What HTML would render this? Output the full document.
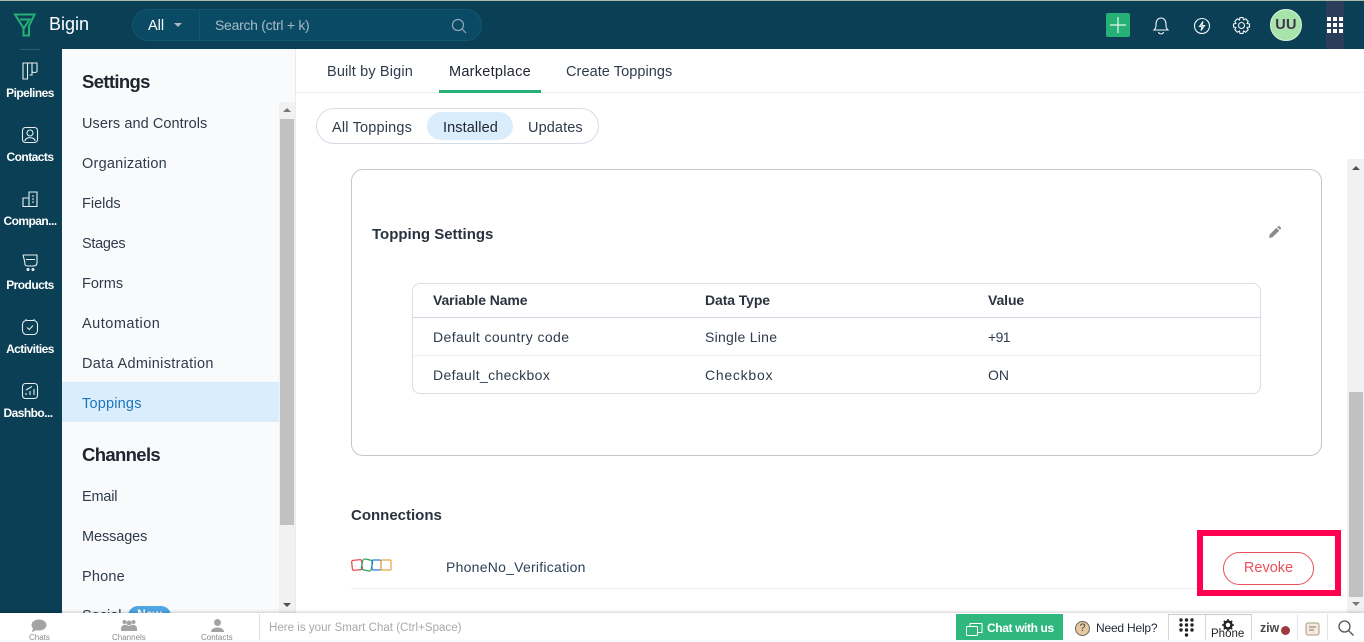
<!DOCTYPE html>
<html><head><meta charset="utf-8"><style>
*{box-sizing:border-box}
html,body{margin:0;padding:0;width:1364px;height:640px;overflow:hidden;background:#fff;font-family:"Liberation Sans",sans-serif;color:#2c3a4b}
.a{position:absolute;white-space:nowrap}
.nav{left:0;width:60px;text-align:center;color:#fff;font-size:12px;font-weight:bold;letter-spacing:-.55px}
.m{left:82px;font-size:14.5px;color:#2f3b4c}
.h{left:82px;font-size:18.5px;font-weight:bold;color:#20262f;letter-spacing:-.65px}
.t{font-size:14.5px;color:#2f3b4c}
.c{font-size:14px;color:#2f3b4c}
.hd{font-size:14px;font-weight:bold;color:#2a3340;letter-spacing:-.1px}
svg{position:absolute;overflow:visible}
</style></head><body>
<div class="a" style="left:0;top:0;width:1364px;height:49px;background:#0a3f55"></div>
<div class="a" style="left:0;top:0;width:1364px;height:1px;background:#a8b8a8"></div>
<svg style="left:14px;top:13px" width="24" height="24" fill="none" stroke="#25b175" stroke-width="2"><path d="M1 1.500H20.500L15 13V22.500H9.500V15ZM6 6.500H15.500L10 15"/></svg>
<div class="a" style="left:49px;top:14px;font-size:18px;color:#fff">Bigin</div>
<div class="a" style="left:132px;top:9px;width:350px;height:32px;border-radius:16px;background:#0b4a65;border:1px solid #14566f"></div>
<div class="a" style="left:199px;top:10px;width:1px;height:30px;background:#14566f"></div>
<div class="a" style="left:148px;top:18px;font-size:14.5px;color:#fff">All</div>
<div class="a" style="left:174px;top:23px;border:4px solid transparent;border-top:4px solid #a9bcc6"></div>
<div class="a" style="left:215px;top:17px;font-size:14px;color:#a6bac5;letter-spacing:-.28px">Search (ctrl + k)</div>
<svg style="left:451px;top:18px" width="16" height="16" fill="none" stroke="#8fa8b5" stroke-width="1.2"><circle cx="7" cy="7" r="5.500"/><path d="M11 11L15 15"/></svg>
<div class="a" style="left:1106px;top:13px;width:24px;height:24px;border-radius:2px;background:#25b175"></div>
<svg style="left:1106px;top:13px" width="24" height="24" stroke="#e8f7ef" stroke-width="1.2"><path d="M12 4V20M4 12H20"/></svg>
<svg style="left:1153px;top:17px" width="16" height="18" fill="none" stroke="#f2f6f7" stroke-width="1.1"><path d="M1 13C3 11 3 10 3 7C3 3.500 5 1 8 1C11 1 13 3.500 13 7C13 10 13 11 15 13ZM5.500 15C6 17.500 10 17.500 10.500 15"/></svg>
<svg style="left:1193px;top:17px" width="18" height="18" fill="none" stroke="#f2f6f7" stroke-width="1.1"><circle cx="9" cy="9" r="7.500"/><path d="M10 4.500L6.500 9.500H9L8 13.500L11.500 8.500H9Z"/></svg>
<svg style="left:1233px;top:17px" width="17" height="17" fill="none" stroke="#f2f6f7" stroke-width="1.1"><circle cx="8.500" cy="8.500" r="3"/><path d="M7 .5H10L10.500 2.800L12.700 1.800L15.200 4.300L14.100 6.500L16.500 7V10L14.100 10.500L15.200 12.700L12.700 15.200L10.500 14.100L10 16.500H7L6.500 14.100L4.300 15.200L1.800 12.700L2.900 10.500L.5 10V7L2.900 6.500L1.800 4.300L4.300 1.800L6.500 2.900Z"/></svg>
<div class="a" style="left:1270px;top:9px;width:32px;height:32px;border-radius:50%;background:#a6e4aa;border:1px solid #dcefdc;text-align:center;font-size:14.5px;line-height:30px;color:#47324f;font-weight:bold;letter-spacing:.3px">UU</div>
<div class="a" style="left:1326px;top:1px;width:18px;height:48px;background:#2a3d5a"></div>
<div class="a" style="left:1327px;top:17px;width:16px;height:16px;background:
linear-gradient(#fff,#fff) 0 0/4px 4px no-repeat,linear-gradient(#fff,#fff) 6px 0/4px 4px no-repeat,linear-gradient(#fff,#fff) 12px 0/4px 4px no-repeat,
linear-gradient(#fff,#fff) 0 6px/4px 4px no-repeat,linear-gradient(#fff,#fff) 6px 6px/4px 4px no-repeat,linear-gradient(#fff,#fff) 12px 6px/4px 4px no-repeat,
linear-gradient(#fff,#fff) 0 12px/4px 4px no-repeat,linear-gradient(#fff,#fff) 6px 12px/4px 4px no-repeat,linear-gradient(#fff,#fff) 12px 12px/4px 4px no-repeat"></div>

<div class="a" style="left:0;top:49px;width:62px;height:565px;background:#0a3f55"></div>
<div class="a" style="left:20px;top:49px;width:20px;height:1px;background:#2f5d70"></div>
<svg style="left:21px;top:62px" width="18" height="18" fill="none" stroke="#e6eef1" stroke-width="1.1"><path d="M2 1H6.500V17H2ZM6.500 1H11V13H8.500M11 1H16V9C16 11 11 11 11 9"/></svg>
<div class="a nav" style="top:86px">Pipelines</div>
<svg style="left:22px;top:127px" width="16" height="16" fill="none" stroke="#e6eef1" stroke-width="1.1"><rect x=".5" y=".5" width="15" height="15" rx="3"/><circle cx="8" cy="6" r="3"/><path d="M3 14C3 9.500 13 9.500 13 14"/></svg>
<div class="a nav" style="top:150px">Contacts</div>
<svg style="left:22px;top:191px" width="16" height="16" fill="none" stroke="#e6eef1" stroke-width="1.1"><path d="M7 15.500V1H15V15.500ZM7 7H1V15.500H7M10 5H12M10 8H12M10 11H12"/></svg>
<div class="a nav" style="top:214px">Compan...</div>
<svg style="left:22px;top:254px" width="17" height="18" fill="none" stroke="#e6eef1" stroke-width="1.1"><path d="M1 1H15V8C15 11 14 12 11 12H6C3 12 2.800 11 2.800 8L1 1M4 5.500H13"/><circle cx="6" cy="15.500" r="1" fill="#e6eef1"/><circle cx="11" cy="15.500" r="1" fill="#e6eef1"/></svg>
<div class="a nav" style="top:278px">Products</div>
<svg style="left:22px;top:319px" width="16" height="16" fill="none" stroke="#e6eef1" stroke-width="1.1"><rect x=".5" y="1.500" width="15" height="14" rx="4"/><path d="M5 8.500L7.300 10.500L11 6.500M4 0V2M12 0V2"/></svg>
<div class="a nav" style="top:342px">Activities</div>
<svg style="left:22px;top:383px" width="16" height="16" fill="none" stroke="#e6eef1" stroke-width="1.1"><rect x=".5" y=".5" width="15" height="15" rx="3"/><path d="M4 12V10M8 12V8M12 12V6M4 7L10 3.500"/></svg>
<div class="a nav" style="top:406px;width:56px">Dashbo...</div>

<div class="a" style="left:62px;top:49px;width:234px;height:565px;background:#f9fafc"></div>
<div class="a h" style="top:71px">Settings</div>
<div class="a m" style="top:116px;letter-spacing:.07px">Users and Controls</div>
<div class="a m" style="top:156px;letter-spacing:.23px">Organization</div>
<div class="a m" style="top:196px">Fields</div>
<div class="a m" style="top:236px;letter-spacing:-.3px">Stages</div>
<div class="a m" style="top:276px">Forms</div>
<div class="a m" style="top:316px;letter-spacing:.5px">Automation</div>
<div class="a m" style="top:356px;letter-spacing:.32px">Data Administration</div>
<div class="a" style="left:62px;top:382px;width:217px;height:40px;background:#d9edfd"></div>
<div class="a m" style="top:396px;color:#1c76b8;letter-spacing:.2px">Toppings</div>
<div class="a h" style="top:444px">Channels</div>
<div class="a m" style="top:489px;letter-spacing:-.2px">Email</div>
<div class="a m" style="top:529px;letter-spacing:-.1px">Messages</div>
<div class="a m" style="top:569px;letter-spacing:.2px">Phone</div>
<div class="a m" style="top:608px">Social</div>
<div class="a" style="left:128px;top:606px;width:43px;height:20px;border-radius:10px;background:#4fa6e3;color:#fff;font-size:12px;text-align:center;line-height:16px;font-weight:bold">New</div>
<div class="a" style="left:279px;top:102px;width:16px;height:512px;background:#f1f1f1"></div>
<div class="a" style="left:280px;top:119px;width:14px;height:406px;background:#c1c1c1"></div>
<div class="a" style="left:283px;top:108px;border:4px solid transparent;border-top:0;border-bottom:4px solid #777"></div>
<div class="a" style="left:283px;top:603px;border:4px solid transparent;border-bottom:0;border-top:4px solid #505050"></div>
<div class="a" style="left:295px;top:49px;width:1px;height:565px;background:#e8eaee"></div>

<div class="a" style="left:296px;top:92px;width:1068px;height:1px;background:#eef2f4"></div>
<div class="a t" style="left:327px;top:64px;letter-spacing:.15px">Built by Bigin</div>
<div class="a t" style="left:449px;top:64px;color:#20262f;letter-spacing:.27px">Marketplace</div>
<div class="a t" style="left:566px;top:64px;letter-spacing:.07px">Create Toppings</div>
<div class="a" style="left:439px;top:90px;width:102px;height:3px;background:#25b175"></div>
<div class="a" style="left:316px;top:108px;width:283px;height:36px;border-radius:18px;border:1px solid #d5dce5"></div>
<div class="a" style="left:427px;top:112px;width:86px;height:28px;border-radius:14px;background:#d9edfd"></div>
<div class="a t" style="left:332px;top:120px;letter-spacing:.18px">All Toppings</div>
<div class="a t" style="left:443px;top:120px;color:#20262f;letter-spacing:.1px">Installed</div>
<div class="a t" style="left:528px;top:120px;letter-spacing:.1px">Updates</div>

<div class="a" style="left:1347px;top:159px;width:17px;height:455px;background:#f1f1f1"></div>
<div class="a" style="left:1349px;top:392px;width:14px;height:205px;background:#c1c1c1"></div>
<div class="a" style="left:1352px;top:166px;border:4px solid transparent;border-top:0;border-bottom:4px solid #505050"></div>
<div class="a" style="left:1352px;top:602px;border:4px solid transparent;border-bottom:0;border-top:4px solid #777"></div>

<div class="a" style="left:351px;top:169px;width:971px;height:287px;border:1px solid #c4c7cc;border-radius:12px"></div>
<div class="a hd" style="left:372px;top:226px;font-size:15px;letter-spacing:0">Topping Settings</div>
<svg style="left:1269px;top:226px" width="12" height="12" fill="#8c8c8c"><path d="M0 12L.7 8.500L7.300 1.800L10.300 4.800L3.500 11.300ZM8.200 1L9 .2C9.500 -.1 10 -.1 10.400 .2L11.800 1.600C12.100 2 12.100 2.500 11.800 3L11 3.800Z"/></svg>
<div class="a" style="left:412px;top:283px;width:849px;height:111px;border:1px solid #d8dee6;border-radius:8px"></div>
<div class="a" style="left:413px;top:317px;width:847px;height:1px;background:#cfd8e2"></div>
<div class="a" style="left:413px;top:355px;width:847px;height:1px;background:#eaeef3"></div>
<div class="a hd" style="left:433px;top:292px">Variable Name</div>
<div class="a hd" style="left:705px;top:292px">Data Type</div>
<div class="a hd" style="left:988px;top:292px">Value</div>
<div class="a c" style="left:433px;top:329px;letter-spacing:.4px">Default country code</div>
<div class="a c" style="left:705px;top:329px;letter-spacing:.27px">Single Line</div>
<div class="a c" style="left:988px;top:329px;letter-spacing:-.6px">+91</div>
<div class="a c" style="left:433px;top:367px;letter-spacing:.37px">Default_checkbox</div>
<div class="a c" style="left:705px;top:367px;letter-spacing:.75px">Checkbox</div>
<div class="a c" style="left:988px;top:367px">ON</div>

<div class="a hd" style="left:351px;top:507px;font-size:15px;letter-spacing:0">Connections</div>
<svg style="left:351px;top:558px" width="41" height="15" fill="none" stroke-width="1.2"><rect x="1" y="2" width="10" height="10" rx="1.500" stroke="#e8414b" transform="rotate(-6 6 7)"/><rect x="11" y="1.500" width="10" height="11" rx="2" stroke="#27a564" transform="rotate(12 16 7)"/><rect x="21" y="2" width="9" height="10" rx="1.500" stroke="#2a7fd0"/><rect x="30" y="2" width="10" height="10" rx="1" stroke="#eea43f"/></svg>
<div class="a c" style="left:446px;top:559px;color:#2c4258;letter-spacing:.25px">PhoneNo_Verification</div>
<div class="a" style="left:351px;top:588px;width:846px;height:1px;background:#eaeef5"></div>
<div class="a" style="left:1197px;top:530px;width:144px;height:66px;border:6px solid #ff0050"></div>
<div class="a" style="left:1223px;top:552px;width:91px;height:33px;border:1px solid #e8505b;border-radius:17px;color:#e8505b;text-align:center;font-size:14.5px;line-height:31px">Revoke</div>

<div class="a" style="left:0;top:613px;width:1364px;height:27px;background:#fff;box-shadow:0 -1px 3px rgba(0,0,0,.18)"></div>
<svg style="left:31px;top:619px" width="16" height="13" fill="#a3a3a3"><ellipse cx="8" cy="6" rx="7.500" ry="5.500"/><path d="M2 9L1 13L6 11Z"/></svg>
<div class="a" style="left:29px;top:633px;font-size:8px;color:#8a8a8a">Chats</div>
<svg style="left:121px;top:619px" width="16" height="13" fill="#a3a3a3"><circle cx="3.500" cy="3" r="2"/><circle cx="12.500" cy="3" r="2"/><circle cx="8" cy="4" r="2.500"/><path d="M0 10C0 5 6 5 7 7H9C10 5 16 5 16 10V12H0Z"/></svg>
<div class="a" style="left:112px;top:633px;font-size:8px;color:#8a8a8a">Channels</div>
<svg style="left:211px;top:619px" width="13" height="13" fill="#a3a3a3"><circle cx="6.500" cy="3.500" r="3.500"/><path d="M0 13C0 7 13 7 13 13Z"/></svg>
<div class="a" style="left:201px;top:633px;font-size:8px;color:#8a8a8a">Contacts</div>
<div class="a" style="left:259px;top:614px;width:1px;height:26px;background:#dcdcdc"></div>
<div class="a" style="left:269px;top:622px;font-size:11.5px;color:#a8a8a8;letter-spacing:.03px">Here is your Smart Chat (Ctrl+Space)</div>
<div class="a" style="left:956px;top:614px;width:107px;height:26px;background:#2fb77d"></div>
<svg style="left:966px;top:622px" width="17" height="15" fill="none" stroke="#fff" stroke-width="1"><rect x=".5" y="4.500" width="11" height="9" rx="1"/><path d="M4 4.500V1.500H16V10.500H11.500"/></svg>
<div class="a" style="left:987px;top:621px;font-size:12px;font-weight:bold;color:#fff;letter-spacing:-.38px">Chat with us</div>
<div class="a" style="left:1075px;top:621px;width:15px;height:15px;border-radius:50%;background:#e6c9a0;border:1px solid #666;font-size:11px;line-height:13px;text-align:center;color:#444">?</div>
<div class="a" style="left:1096px;top:621px;font-size:12px;color:#1f2a38;letter-spacing:-.2px">Need Help?</div>
<div class="a" style="left:1168px;top:614px;width:1px;height:26px;background:#d5d5d5"></div>
<div class="a" style="left:1205px;top:614px;width:1px;height:26px;background:#d5d5d5"></div>
<div class="a" style="left:1251px;top:614px;width:1px;height:26px;background:#d5d5d5"></div>
<div class="a" style="left:1297px;top:614px;width:1px;height:26px;background:#e5e5e5"></div>
<div class="a" style="left:1327px;top:614px;width:1px;height:26px;background:#e5e5e5"></div>
<div class="a" style="left:1168px;top:614px;width:84px;height:1px;background:#c8c8c8"></div>
<svg style="left:1179px;top:618px" width="16" height="19" fill="#222"><circle cx="2" cy="2" r="1.700"/><circle cx="7.500" cy="2" r="1.700"/><circle cx="13" cy="2" r="1.700"/><circle cx="2" cy="7" r="1.700"/><circle cx="7.500" cy="7" r="1.700"/><circle cx="13" cy="7" r="1.700"/><circle cx="2" cy="12" r="1.700"/><circle cx="7.500" cy="12" r="1.700"/><circle cx="13" cy="12" r="1.700"/><circle cx="7.500" cy="17" r="1.700"/></svg>
<svg style="left:1222px;top:619px" width="12" height="12" fill="none" stroke="#222" stroke-width="2.500"><circle cx="6" cy="6" r="3.500"/><path d="M6 0V2M6 10V12M0 6H2M10 6H12M1.800 1.800L3.200 3.200M8.800 8.800L10.200 10.200M1.800 10.200L3.200 8.800M8.800 3.200L10.200 1.800" stroke-width="1.500"/></svg>
<div class="a" style="left:1211px;top:628px;font-size:11.500px;color:#222">Phone</div>
<div class="a" style="left:1260px;top:621px;font-size:12.5px;font-weight:bold;color:#4a4a4a;letter-spacing:-.1px">ziw</div>
<div class="a" style="left:1281px;top:626px;width:9px;height:9px;border-radius:50%;background:#9c3a42"></div>
<svg style="left:1305px;top:621px" width="15" height="15" fill="none" stroke="#8a8a8a"><rect x="1" y="2" width="13" height="12" rx="2" fill="#f6ead8" stroke="#a89a86"/><path d="M4 6H11M4 9H9" stroke="#777"/></svg>
<svg style="left:1338px;top:620px" width="16" height="16" fill="none" stroke="#555" stroke-width="1.300"><circle cx="6.500" cy="6.500" r="5.500"/><path d="M10.500 10.500L15.500 15.500"/></svg>
</body></html>
